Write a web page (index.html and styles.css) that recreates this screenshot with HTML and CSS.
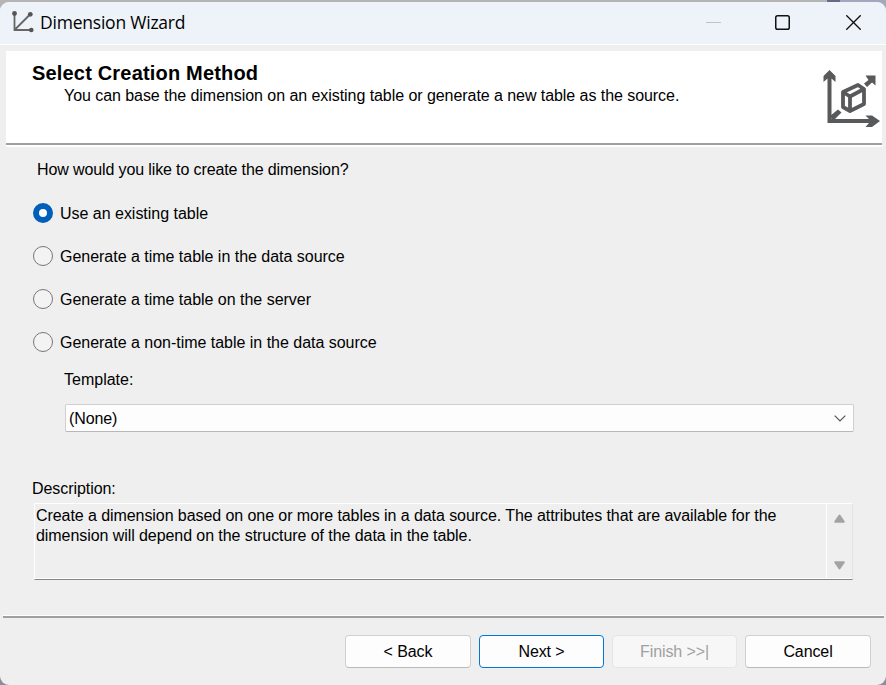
FILE: index.html
```html
<!DOCTYPE html>
<html lang="en">
<head>
<meta charset="utf-8">
<title>Dimension Wizard</title>
<link rel="stylesheet" href="styles.css">
</head>
<body>
<main class="window">
  <div class="titlebar">
    <svg class="app-icon" width="22" height="22" viewBox="0 0 22 22" fill="none" stroke="#666" stroke-width="1.8"><path d="M2.5 2.5V19H19.5M2.5 19L18.5 3"/><g fill="#555" stroke="none"><circle cx="2.5" cy="2.5" r="2.4"/><circle cx="18.3" cy="3.3" r="2.4"/><circle cx="19.3" cy="19" r="2.3"/></g></svg>
    <h1 class="title">Dimension Wizard</h1>
    <svg class="controls" width="155" height="15" viewBox="0 0 155 15" fill="none"><path d="M0 7.5H15" stroke="#bfc3c7"/><rect x="69.75" y=".75" width="13.5" height="13.5" rx="1.8" stroke="#111" stroke-width="1.5"/><path d="M140.3.3L154.7 14.7M154.7.3L140.3 14.7" stroke="#111" stroke-width="1.4"/></svg>
  </div>
  <header class="banner">
    <div>
      <h2 class="heading">Select Creation Method</h2>
      <p class="subheading">You can base the dimension on an existing table or generate a new table as the source.</p>
    </div>
    <svg class="banner-icon" width="58" height="58" viewBox="0 0 58 58" fill="#58595b"><path d="M6.500 0L12.500 6V12L8.500 8.500V49H46L42.500 45.500H49L57 51L49 57H42.500L46 53H4.500V8.500L.5 12V6Z"/><path d="M7 46L15 39.500L18.500 42.500L10 51Z"/><path d="M41 13.500L45.500 10L42.500 5.500H52.500V15.500L49 12.500L44 17Z"/><path d="M20 22L35 15L41 19V34L27 41L20 37ZM20 22L27 26.500L41 19M27 26.500V41" fill="none" stroke="#58595b" stroke-width="3.800" stroke-linejoin="round"/></svg>
  </header>
  <section class="content">
    <p class="question">How would you like to create the dimension?</p>
    <div class="options">
      <label class="option"><input class="radio" type="radio" name="method" checked><span>Use an existing table</span></label>
      <label class="option"><input class="radio" type="radio" name="method"><span>Generate a time table in the data source</span></label>
      <label class="option"><input class="radio" type="radio" name="method"><span>Generate a time table on the server</span></label>
      <label class="option"><input class="radio" type="radio" name="method"><span>Generate a non-time table in the data source</span></label>
    </div>
    <p class="template-label">Template:</p>
    <div class="select"><span>(None)</span><svg width="12" height="7" viewBox="0 0 12 7" fill="none" stroke="#555" stroke-width="1.2"><path d="M.7.7L6 6L11.300.7"/></svg></div>
    <p class="description-label">Description:</p>
    <div class="description">
      <p class="description-text">Create a dimension based on one or more tables in a data source. The attributes that are available for the<br>dimension will depend on the structure of the data in the table.</p>
      <div class="scrollbar">
        <svg width="11" height="9" viewBox="0 0 11 9"><path d="M1.200 7.700L5.500 1.500L9.800 7.700Z" fill="#a3a3a3" stroke="#a3a3a3" stroke-width="2" stroke-linejoin="round"/></svg>
        <svg width="11" height="9" viewBox="0 0 11 9"><path d="M1.200 1.300L5.500 7.500L9.800 1.300Z" fill="#a3a3a3" stroke="#a3a3a3" stroke-width="2" stroke-linejoin="round"/></svg>
      </div>
    </div>
  </section>
  <footer class="footer">
    <button class="button">&lt; Back</button>
    <button class="button primary">Next &gt;</button>
    <button class="button" disabled>Finish &gt;&gt;|</button>
    <button class="button">Cancel</button>
  </footer>
</main>
</body>
</html>
```
FILE: styles.css
```css
* { box-sizing: border-box; }
h1, h2, p { margin: 0; font-weight: normal; }
body {
  margin: 0;
  height: 685px;
  padding-top: 2px;
  overflow: hidden;
  background: linear-gradient(90deg, #b5b5b5 827px, #666a88 827px 840px, #a4a8bd 840px) top / 100% 50% no-repeat, #8c8f9b;
  font: 16px/20px "Liberation Sans", Arial, sans-serif;
  color: #000;
}
.window {
  display: flex;
  flex-direction: column;
  height: 683px;
  border-radius: 9px;
  overflow: hidden;
  background: #efefef;
}
.titlebar {
  display: flex;
  align-items: center;
  flex: none;
  height: 43px;
  padding: 0 25px 2px 12px;
  border-bottom: 1px solid #fff;
  background: #eef3f9;
}
.app-icon { flex: none; }
.title {
  margin-left: 6px;
  font: 17.5px/24px "Open Sans", "Noto Sans", sans-serif;
  letter-spacing: -0.22px;
}
.controls { margin-left: auto; }
.banner {
  display: flex;
  justify-content: space-between;
  flex: none;
  height: 96px;
  margin: 6px 3px 0 6px;
  padding: 10px 2px 0 26px;
  border-right: 1px solid #efefef;
  background: #fff;
  border-bottom: 2px solid #fff;
  box-shadow: inset 0 -2px #a0a0a0;
}
.heading { font-size: 20px; font-weight: bold; line-height: 24px; letter-spacing: 0.18px; }
.subheading { padding: 1px 0 0 32px; letter-spacing: -0.058px; }
.banner-icon { flex: none; margin: 9px -1px 0 0; }
.content { flex: none; height: 468px; padding: 13px 33px 0; }
.question { padding-left: 4px; letter-spacing: -0.12px; }
.options { display: grid; gap: 23px; margin-top: 23px; letter-spacing: -0.02px; }
.option { display: flex; align-items: center; gap: 7px; height: 20px; }
.option span { padding-top: 2px; }
.radio {
  appearance: none;
  width: 20px;
  height: 20px;
  margin: 0;
  border: 1px solid #777;
  border-radius: 50%;
  background: #f3f3f3;
}
.radio:checked { border: 6px solid #005fb8; background: #fff; }
.template-label { margin: 18px 0 0 31px; }
.select {
  display: flex;
  align-items: center;
  justify-content: space-between;
  height: 28px;
  margin: 14px -1px 0 32px;
  padding: 0 7px 0 3px;
  border: 1px solid #d0d0d0;
  border-bottom-color: #b8b8b8;
  border-radius: 2px;
  background: #fdfdfd;
}
.select span { padding-top: 2px; letter-spacing: -0.1px; }
.description-label { margin: 47px 0 0 -1px; letter-spacing: -0.06px; }
.description {
  display: flex;
  justify-content: space-between;
  height: 77px;
  margin: 4px 0 0 1px;
  border: 1px solid #fff;
  border-right-color: #e4e4e4;
  border-bottom-color: #858585;
  box-shadow: inset 0 -1px #fff;
}
.description-text { padding: 2px 0 0 1px; white-space: nowrap; letter-spacing: -0.07px; }
.scrollbar {
  display: flex;
  flex-direction: column;
  align-items: center;
  justify-content: space-between;
  width: 26px;
  padding: 10px 0 9px;
  border-left: 1px solid #fff;
}
.footer {
  display: flex;
  justify-content: flex-end;
  gap: 8px;
  height: 70px;
  margin: 0 2px 0 3px;
  padding: 19px 13px 0 0;
  border-top: 1px solid #fff;
  box-shadow: inset 0 2px #a0a0a0;
}
.button {
  width: 126px;
  height: 33px;
  padding: 0;
  border: 1px solid #d0d0d0;
  border-bottom-color: #bababa;
  border-radius: 4px;
  background: #fdfdfd;
  color: #000;
  font: inherit;
  letter-spacing: -0.1px;
}
.primary { width: 125px; border-color: #0078d4; }
.button:disabled { width: 125px; border-color: #e5e5e5; background: #f7f7f7; color: #a0a0a0; }
```
